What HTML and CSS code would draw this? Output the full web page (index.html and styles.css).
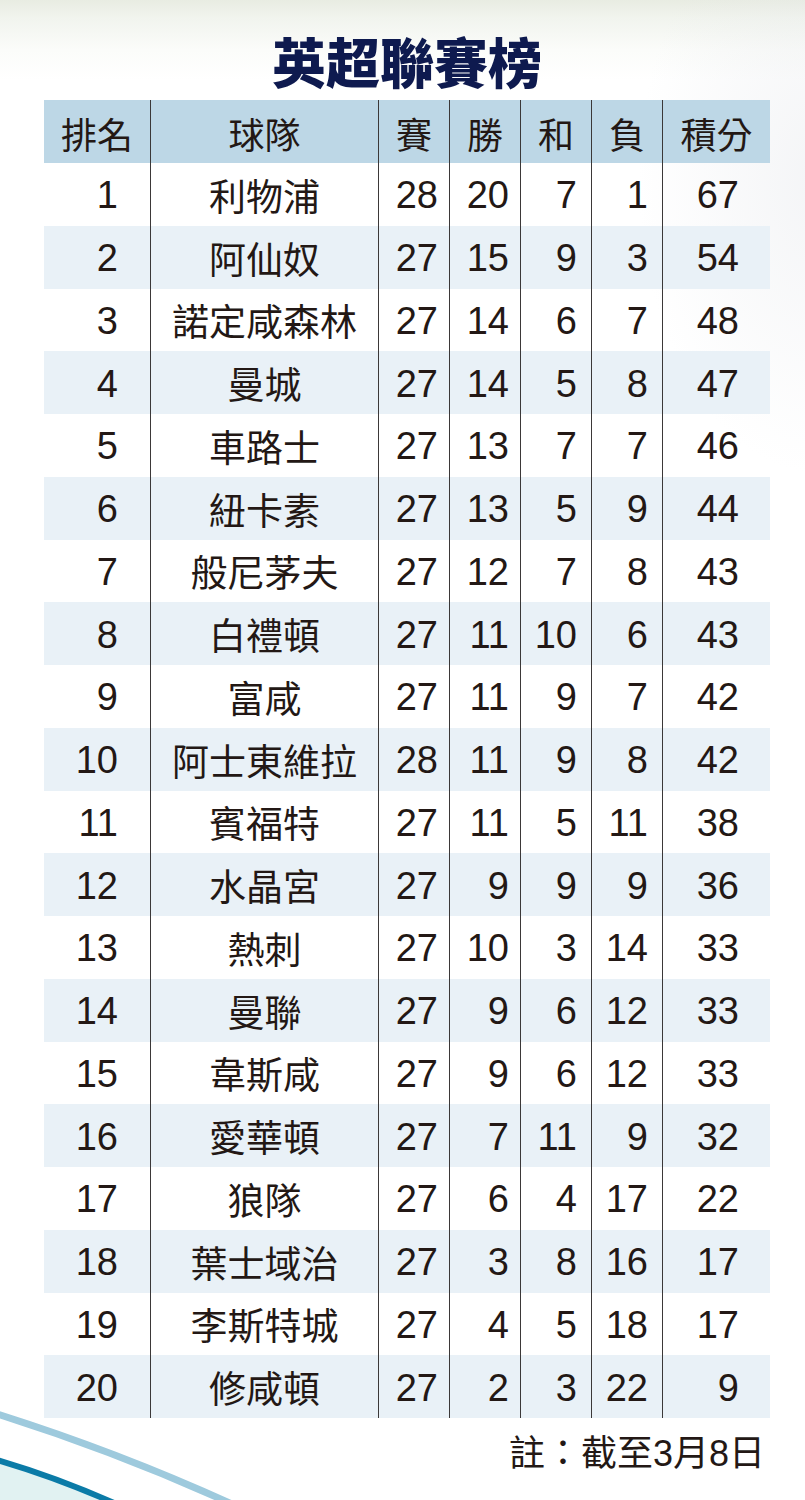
FILE: index.html
```html
<!DOCTYPE html>
<html lang="zh-Hant">
<head>
<meta charset="utf-8">
<title>英超聯賽榜</title>
<link rel="stylesheet" href="styles.css">
</head>
<body>
<div class="page">
  <h1 class="title">英超聯賽榜</h1>
  <div class="table">
    <div class="row head">
      <div class="c">排名</div><div class="c">球隊</div><div class="c">賽</div><div class="c">勝</div><div class="c">和</div><div class="c">負</div><div class="c">積分</div>
    </div>
    <div class="row"><div class="c n rk">1</div><div class="c t">利物浦</div><div class="c n">28</div><div class="c n">20</div><div class="c n w">7</div><div class="c n w">1</div><div class="c n pt">67</div></div>
    <div class="row alt"><div class="c n rk">2</div><div class="c t">阿仙奴</div><div class="c n">27</div><div class="c n">15</div><div class="c n w">9</div><div class="c n w">3</div><div class="c n pt">54</div></div>
    <div class="row"><div class="c n rk">3</div><div class="c t">諾定咸森林</div><div class="c n">27</div><div class="c n">14</div><div class="c n w">6</div><div class="c n w">7</div><div class="c n pt">48</div></div>
    <div class="row alt"><div class="c n rk">4</div><div class="c t">曼城</div><div class="c n">27</div><div class="c n">14</div><div class="c n w">5</div><div class="c n w">8</div><div class="c n pt">47</div></div>
    <div class="row"><div class="c n rk">5</div><div class="c t">車路士</div><div class="c n">27</div><div class="c n">13</div><div class="c n w">7</div><div class="c n w">7</div><div class="c n pt">46</div></div>
    <div class="row alt"><div class="c n rk">6</div><div class="c t">紐卡素</div><div class="c n">27</div><div class="c n">13</div><div class="c n w">5</div><div class="c n w">9</div><div class="c n pt">44</div></div>
    <div class="row"><div class="c n rk">7</div><div class="c t">般尼茅夫</div><div class="c n">27</div><div class="c n">12</div><div class="c n w">7</div><div class="c n w">8</div><div class="c n pt">43</div></div>
    <div class="row alt"><div class="c n rk">8</div><div class="c t">白禮頓</div><div class="c n">27</div><div class="c n">11</div><div class="c n w">10</div><div class="c n w">6</div><div class="c n pt">43</div></div>
    <div class="row"><div class="c n rk">9</div><div class="c t">富咸</div><div class="c n">27</div><div class="c n">11</div><div class="c n w">9</div><div class="c n w">7</div><div class="c n pt">42</div></div>
    <div class="row alt"><div class="c n rk">10</div><div class="c t">阿士東維拉</div><div class="c n">28</div><div class="c n">11</div><div class="c n w">9</div><div class="c n w">8</div><div class="c n pt">42</div></div>
    <div class="row"><div class="c n rk">11</div><div class="c t">賓福特</div><div class="c n">27</div><div class="c n">11</div><div class="c n w">5</div><div class="c n w">11</div><div class="c n pt">38</div></div>
    <div class="row alt"><div class="c n rk">12</div><div class="c t">水晶宮</div><div class="c n">27</div><div class="c n">9</div><div class="c n w">9</div><div class="c n w">9</div><div class="c n pt">36</div></div>
    <div class="row"><div class="c n rk">13</div><div class="c t">熱刺</div><div class="c n">27</div><div class="c n">10</div><div class="c n w">3</div><div class="c n w">14</div><div class="c n pt">33</div></div>
    <div class="row alt"><div class="c n rk">14</div><div class="c t">曼聯</div><div class="c n">27</div><div class="c n">9</div><div class="c n w">6</div><div class="c n w">12</div><div class="c n pt">33</div></div>
    <div class="row"><div class="c n rk">15</div><div class="c t">韋斯咸</div><div class="c n">27</div><div class="c n">9</div><div class="c n w">6</div><div class="c n w">12</div><div class="c n pt">33</div></div>
    <div class="row alt"><div class="c n rk">16</div><div class="c t">愛華頓</div><div class="c n">27</div><div class="c n">7</div><div class="c n w">11</div><div class="c n w">9</div><div class="c n pt">32</div></div>
    <div class="row"><div class="c n rk">17</div><div class="c t">狼隊</div><div class="c n">27</div><div class="c n">6</div><div class="c n w">4</div><div class="c n w">17</div><div class="c n pt">22</div></div>
    <div class="row alt"><div class="c n rk">18</div><div class="c t">葉士域治</div><div class="c n">27</div><div class="c n">3</div><div class="c n w">8</div><div class="c n w">16</div><div class="c n pt">17</div></div>
    <div class="row"><div class="c n rk">19</div><div class="c t">李斯特城</div><div class="c n">27</div><div class="c n">4</div><div class="c n w">5</div><div class="c n w">18</div><div class="c n pt">17</div></div>
    <div class="row alt"><div class="c n rk">20</div><div class="c t">修咸頓</div><div class="c n">27</div><div class="c n">2</div><div class="c n w">3</div><div class="c n w">22</div><div class="c n pt">9</div></div>
  </div>
  <p class="note">註：截至3月8日</p>
  <svg class="swoosh" width="300" height="100" viewBox="0 0 300 100" aria-hidden="true">
    <path d="M0,62 Q58,80 112,100 L0,100 Z" fill="#e1f2f2"/>
    <path d="M-6,59 Q56,77 114,103" fill="none" stroke="#0b7ba7" stroke-width="6"/>
    <path d="M-6,13 Q118,52 234,105" fill="none" stroke="#9ecadd" stroke-width="7"/>
  </svg>
</div>
</body>
</html>
```
FILE: styles.css
```css
html, body {
  margin: 0;
  padding: 0;
}
body {
  width: 805px;
  height: 1500px;
  overflow: hidden;
  background:
    radial-gradient(ellipse 260px 420px at 820px 180px, rgba(230,232,236,0.45), rgba(255,255,255,0) 70%),
    linear-gradient(to bottom, #e8ece2 0, #f1f4ee 18px, #fbfcfa 50px, #ffffff 80px);
  font-family: "Liberation Sans", "Noto Sans CJK TC", sans-serif;
  color: #231815;
}
.page {
  position: relative;
  width: 805px;
  height: 1500px;
}
.title {
  margin: 0;
  height: 100px;
  box-sizing: border-box;
  padding: 33px 0 0 44px;
  width: 770px;
  text-align: center;
  font-family: "Noto Sans CJK TC", sans-serif;
  font-weight: 900;
  font-size: 54px;
  line-height: 56px;
  color: #0e1a4f;
}
.table {
  margin-left: 44px;
  width: 726px;
}
.row {
  display: grid;
  grid-template-columns: 106px 228px 71px 71px 71px 71px 108px;
  height: 62.75px;
}
.row.head {
  height: 63px;
  background: #bdd7e6;
}
.row.alt {
  background: #e9f1f7;
}
.c {
  display: flex;
  align-items: center;
  justify-content: center;
  font-size: 37px;
  line-height: 1;
  padding-top: 2px;
  box-sizing: border-box;
}
.c + .c {
  border-left: 1px solid #3b3838;
}
.head .c {
  font-family: "Noto Sans CJK TC", sans-serif;
  font-size: 36px;
}
.t {
  font-family: "Noto Sans CJK TC", sans-serif;
  font-size: 37px;
}
.n {
  justify-content: flex-end;
  padding-right: 11px;
  font-size: 38px;
}
.n.w {
  padding-right: 14px;
}
.n.rk {
  padding-right: 32px;
}
.n.pt {
  padding-right: 31px;
}
.note {
  margin: 16px 0 0 0;
  width: 765px;
  text-align: right;
  font-family: "Liberation Sans", "Noto Sans CJK TC", sans-serif;
  font-size: 36px;
  line-height: 40px;
}
.swoosh {
  position: absolute;
  left: 0;
  top: 1400px;
}
```
